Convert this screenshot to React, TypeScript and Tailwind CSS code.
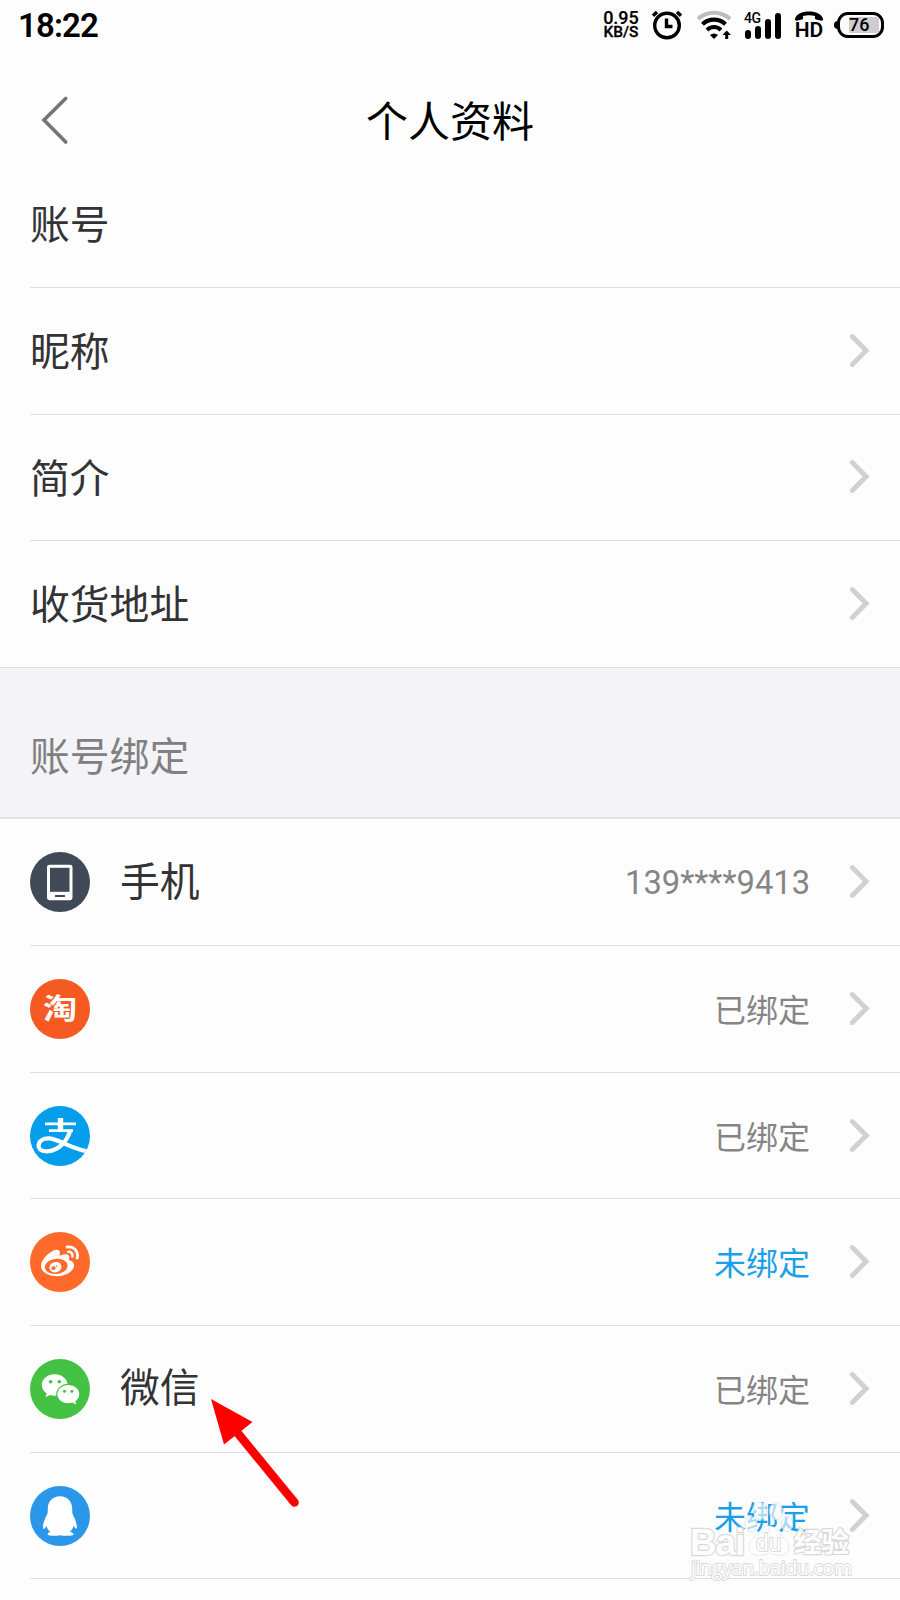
import type { ReactNode } from "react";
import clsx from "clsx";
import { FaWeibo } from "react-icons/fa";

const profileRows = [
  { label: "账号", arrow: false },
  { label: "昵称", arrow: true },
  { label: "简介", arrow: true },
  { label: "收货地址", arrow: true },
];

const Chevron = () => (
  <svg className="h-[36px] w-[22px] shrink-0" viewBox="0 0 22 36" fill="none">
    <path d="M3.3 3.5 17.2 17.5 3.3 31.5" stroke="#d1d0d6" strokeWidth="4.8" strokeLinecap="round" strokeLinejoin="miter" />
  </svg>
);

const PhoneIcon = () => (
  <svg className="size-full" viewBox="0 0 60 60">
    <rect x="17" y="12.800" width="25.5" height="35.400" rx="2.4" fill="#fff" />
    <rect x="20" y="15.8" width="19.500" height="24" fill="#3f4a56" />
    <rect x="25" y="43" width="10" height="2" rx="0.5" fill="#3f4a56" />
  </svg>
);

const AlipayIcon = () => (
  <svg className="size-full" viewBox="0 0 60 60" fill="none" stroke="#fff">
    <path d="M15 17.800h31" strokeWidth="2.8" />
    <path d="M30.500 12v13" strokeWidth="5.4" />
    <path d="M19 24.600h24" strokeWidth="2.8" />
    <path d="M40.300 24C38 33 30 45.300 16.500 45.300 10.500 45.300 8.300 42.500 8.600 39.300 9 35 13 32.400 18.500 32.400 28 32.400 39 42 57 45.200" strokeWidth="4.2" />
  </svg>
);

const WechatIcon = () => (
  <svg className="size-full" viewBox="0 0 60 60">
    <path d="M24.600 15.200C17.500 15.200 11.800 20 11.800 26c0 3.500 1.900 6.500 4.900 8.500L15.500 38.300l4.700-2.300c1.400.4 2.900.7 4.500.7 7 0 12.900-4.800 12.900-10.700S31.700 15.200 24.600 15.200Z" fill="#fff" />
    <ellipse cx="38.200" cy="35.300" rx="12" ry="10.500" fill="#45c143" />
    <path d="M38.300 26c6.100 0 11 4.100 11 9.200 0 2.900-1.600 5.400-4 7.100l.9 3.200-3.800-1.900c-1.300.4-2.700.6-4.100.6-6.100 0-10.900-4-10.900-9s4.800-9.200 10.900-9.200Z" fill="#fff" />
    <g fill="#45c143">
      <circle cx="20.600" cy="22.800" r="1.800" />
      <circle cx="29.300" cy="22.800" r="1.800" />
      <circle cx="34.500" cy="32.300" r="1.500" />
      <circle cx="41.900" cy="32.300" r="1.500" />
    </g>
  </svg>
);

const QQIcon = () => (
  <svg className="size-full" viewBox="0 0 60 60">
    <path
      d="M30 10.300C22.500 10.300 18 15.600 17.800 22.300L17.700 27C16.200 30.500 12.800 37 13 40.600 13.100 42.600 13.600 43.300 14.200 42.900 15 42.400 16 41 16.500 39.800 17 42.400 18.200 44.600 20.300 45.400 18.800 46 17.500 47.500 17.700 48.500 18.100 50.200 26.500 50 30 49.200 33.500 50 43 50.200 43.800 48.500 44 47.500 41.400 46 39.700 45.400 41.800 44.600 43 42.400 43.500 39.800 44.500 41.500 45.800 43 46.400 42.600 47.400 41.500 46.500 37.500 45.500 34.800 44.500 31.600 43 29.500 42.300 27L42.200 22.300C42 15.600 37.500 10.300 30 10.300Z"
      fill="#fff"
    />
  </svg>
);

interface Binding {
  id: string;
  label?: string;
  status: string;
  bound: boolean;
  color: string;
  icon: ReactNode;
}

const bindings: Binding[] = [
  { id: "phone", label: "手机", status: "139****9413", bound: true, color: "bg-[#3f4a56]", icon: <PhoneIcon /> },
  {
    id: "taobao",
    status: "已绑定",
    bound: true,
    color: "bg-[#f55a22]",
    icon: <span className="scale-x-[1.22] pt-[3px] text-[28px] leading-none font-bold text-white">淘</span>,
  },
  { id: "alipay", status: "已绑定", bound: true, color: "bg-[#059eea]", icon: <AlipayIcon /> },
  { id: "weibo", status: "未绑定", bound: false, color: "bg-[#ff6a2a]", icon: <FaWeibo className="size-[38px] text-white" /> },
  { id: "wechat", label: "微信", status: "已绑定", bound: true, color: "bg-[#45c143]", icon: <WechatIcon /> },
  { id: "qq", status: "未绑定", bound: false, color: "bg-[#2b97ea]", icon: <QQIcon /> },
];

const StatusBar = () => (
  <div className="flex h-[50px] items-center justify-between pr-[16px] pl-[18px] text-black">
    <span className="text-[33px] leading-none font-semibold tracking-[-0.900px]">18:22</span>
    <div className="flex items-center">
      <div className="mr-[11px] flex w-[38px] flex-col items-center font-medium">
        <span className="text-[18px] leading-[15px] [-webkit-text-stroke:0.2px_black]">0.95</span>
        <span className="text-[15.500px] leading-[15px] [-webkit-text-stroke:0.3px_black]">KB/S</span>
      </div>
      {/* alarm */}
      <svg className="mr-[13px] h-[30px] w-[32px]" viewBox="0 0 32 30" fill="none" stroke="#000">
        <circle cx="16" cy="15.500" r="12.300" strokeWidth="3.4" />
        <path d="M15.500 8.500v8h6" strokeWidth="3.4" />
        <path d="M2 5.800 6 2M30 5.800 26 2" strokeWidth="3.4" />
      </svg>
      {/* wifi */}
      <svg className="mr-[12px] h-[30px] w-[36px]" viewBox="0 0 36 30" fill="none">
        <path d="M2 9C11 .8 25 .8 34 9" stroke="#bdbdbd" strokeWidth="4" />
        <path d="M6.500 14.200C13 8.200 23 8.200 29.500 14.200" stroke="#000" strokeWidth="4.200" />
        <path d="M11 20C15 16 21 16 25 20" stroke="#000" strokeWidth="4" />
        <path d="M18 29 14 25C16.500 23 19.500 23 22 25Z" fill="#000" />
        <path d="M30.700 20.500 35 25H32.200V29H29.200V25H26.500Z" fill="#000" />
      </svg>
      {/* signal */}
      <div className="relative mr-[14px] flex h-[27px] w-[37px] items-end justify-end gap-[4px]">
        <span className="absolute -top-px left-0 text-[14px] leading-none font-medium tracking-tight">4G</span>
        <i className="h-[9px] w-[6px] rounded-full bg-black" />
        <i className="h-[13px] w-[6px] rounded-full bg-black" />
        <i className="h-[20px] w-[6px] rounded-full bg-black" />
        <i className="h-[26px] w-[6px] rounded-full bg-black" />
      </div>
      {/* HD call */}
      <div className="mr-[11px] flex h-[28px] w-[28px] flex-col items-center">
        <svg className="h-[11px] w-[28px] shrink-0" viewBox="0 0 28 11">
          <path d="M0 8C1 3 7 .5 14 .5S27 3 28 8C28 9.500 27 10 25.500 9.500L21 8.500C19.500 8 20 6.500 20 5 16 4 12 4 8 5 8 6.500 8.500 8 7 8.500L2.500 9.500C1 10 0 9.500 0 8Z" />
        </svg>
        <span className="text-[21px] leading-[17px] font-semibold">HD</span>
      </div>
      {/* battery */}
      <div className="flex items-center">
        <i className="-mr-px h-[8px] w-[4px] rounded-l-full bg-black" />
        <div className="flex h-[26px] w-[47px] items-center justify-end rounded-[11px] border-[3px] border-black pr-[2px]">
          <span className="flex h-[16px] w-[30px] items-center bg-[#cfcdd2] text-[18px] leading-none font-medium">76</span>
        </div>
      </div>
    </div>
  </div>
);

const Watermark = () => (
  <div className="absolute top-[1500px] left-[690px] h-[82px] w-[164px] text-white opacity-90 [paint-order:stroke_fill] [-webkit-text-stroke:2.4px_#d6d6d6]">
    <svg className="absolute top-[2px] left-[54px] h-[54px] w-[50px]" viewBox="0 0 50 54" fill="#fff" fillOpacity="0.7" stroke="#d0d4d8" strokeWidth="1">
      <ellipse cx="16" cy="9" rx="6.500" ry="8.500" />
      <ellipse cx="32" cy="9" rx="6.500" ry="8.500" />
      <ellipse cx="6.500" cy="22" rx="5.500" ry="7.500" />
      <ellipse cx="43" cy="22" rx="5.500" ry="7.500" />
      <path d="M25 24C19 24 17 30 10 36 2 42 5 53 14 53 19 53 21 51.500 25 51.500S32 53 36 53C45 53 48 42 40 36 33 30 31 24 25 24Z" fillOpacity="1" />
    </svg>
    <span className="absolute top-[24px] left-0 font-['Liberation_Sans'] text-[37px] leading-none font-bold tracking-[-1.200px]">Bai</span>
    <span className="absolute top-[32px] left-[66px] font-['Liberation_Sans'] text-[23px] leading-none [-webkit-text-stroke-width:1.8px]">du</span>
    <span className="absolute top-[29px] left-[104px] text-[27.500px] leading-none font-bold">经验</span>
    <span className="absolute top-[58px] left-px font-['Open_Sans'] text-[19.600px] leading-none tracking-[-0.350px] [-webkit-text-stroke-width:1.8px]">jingyan.baidu.com</span>
  </div>
);

const App = () => {
  return (
    <div className="relative h-[1600px] w-[900px] overflow-hidden bg-[#fdfdfd] font-[Roboto,'Noto_Sans_CJK_SC',sans-serif] text-[#333335]">
      <StatusBar />

      <header className="grid h-[111.300px] grid-cols-[1fr_auto_1fr] items-center">
        <svg className="ml-[40px] h-[50px] w-[32px] translate-y-[14px]" viewBox="0 0 32 50" fill="none">
          <path d="M25.700 3.500 4 25 25.700 47" stroke="#747474" strokeWidth="3.600" strokeLinecap="round" />
        </svg>
        <h1 className="translate-y-[17px] text-[42px] leading-none text-black">个人资料</h1>
      </header>

      <ul>
        {profileRows.map((row, index) => (
          <li key={row.label} className="flex h-[126.660px] items-end">
            <div
              className={clsx(
                "flex h-full w-full items-center justify-between border-b border-[#dedee0] pr-[29px]",
                index === profileRows.length - 1 ? "pl-[30px]" : "ml-[30px]"
              )}
            >
              <span className="pt-[4px] text-[39.800px] leading-none">{row.label}</span>
              {row.arrow && <Chevron />}
            </div>
          </li>
        ))}
      </ul>

      <div className="flex h-[151.500px] items-center border-b-2 border-[#e3e2e6] bg-[#f4f3f7] pt-[31px] pl-[30px] text-[39.800px] leading-none text-[#808080]">
        账号绑定
      </div>

      <ul>
        {bindings.map((item) => (
          <li key={item.id} className="ml-[30px] flex h-[126.660px] items-center border-b border-[#dedee0] pr-[29px]">
            <span className={clsx("flex size-[60px] items-center justify-center overflow-hidden rounded-full", item.color)}>
              {item.icon}
            </span>
            <span className="ml-[30px] pt-px text-[39.800px] leading-none">{item.label}</span>
            <span
              className={clsx(
                "mr-[39px] ml-auto leading-none",
                item.id === "phone" ? "pt-[3px] text-[32.700px]" : "pt-[4px] text-[32px]",
                item.bound ? "text-[#858585]" : "text-[#1a9fe8]"
              )}
            >
              {item.status}
            </span>
            <Chevron />
          </li>
        ))}
      </ul>

      <Watermark />

      {/* pointer to the WeChat row */}
      <svg className="absolute top-[1395px] left-[205px] h-[115px] w-[100px]" viewBox="0 0 100 115">
        <path d="M31 36 89.500 107.500" stroke="#fe0000" strokeWidth="8.600" strokeLinecap="round" />
        <path d="M6 4 47.500 27 19 49.500Z" fill="#fe0000" />
      </svg>
    </div>
  );
};

export default App;
